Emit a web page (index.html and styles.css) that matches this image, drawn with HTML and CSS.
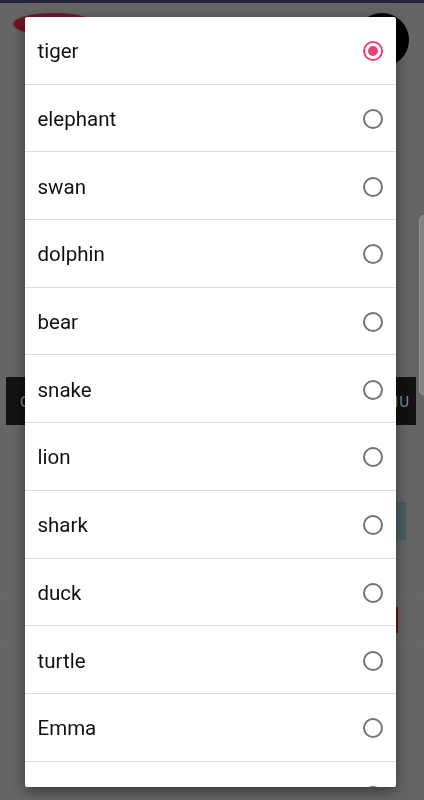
FILE: index.html
```html
<!DOCTYPE html>
<html lang="en">
<head>
    <meta charset="UTF-8">
    <meta name="viewport" content="width=device-width, initial-scale=1.0">
    <title>Pick an animal</title>
    <link rel="stylesheet" href="styles.css">
</head>
<body>

    <div class="screen">
        <div class="top-bar"></div>
        <div class="header">
            <div class="logo-oval"></div>
            <div class="avatar"></div>
        </div>

        <div class="menu-bar">
            <span class="menu-left">Q</span>
            <span class="menu-right">NU</span>
        </div>

        <div class="teal-btn"></div>
        <div class="faint-line"></div>
        <div class="red-btn"></div>
        <div class="faint-line low"></div>

        <div class="side-tab"></div>
    </div>

    <div class="dialog">
        <ul class="choice-list">
            <li class="choice selected"><span>tiger</span><span class="radio"></span></li>
            <li class="choice"><span>elephant</span><span class="radio"></span></li>
            <li class="choice"><span>swan</span><span class="radio"></span></li>
            <li class="choice"><span>dolphin</span><span class="radio"></span></li>
            <li class="choice"><span>bear</span><span class="radio"></span></li>
            <li class="choice"><span>snake</span><span class="radio"></span></li>
            <li class="choice"><span>lion</span><span class="radio"></span></li>
            <li class="choice"><span>shark</span><span class="radio"></span></li>
            <li class="choice"><span>duck</span><span class="radio"></span></li>
            <li class="choice"><span>turtle</span><span class="radio"></span></li>
            <li class="choice"><span>Emma</span><span class="radio"></span></li>
            <li class="choice"><span></span><span class="radio"></span></li>
        </ul>
    </div>

</body>
</html>
```

FILE: styles.css
```css
body {
    margin: 0;
    background: #656565;
    font-family: Roboto, "Noto Sans", Arial, sans-serif;
    overflow: hidden;
}

.screen {
    display: flex;
    flex-direction: column;
    height: 800px;
}

.top-bar {
    height: 3px;
    background: #24243d;
}

.header {
    display: flex;
    justify-content: space-between;
    align-items: flex-start;
    padding: 10px 15px 0 13px;
}

.logo-oval {
    width: 82px;
    height: 22px;
    border-radius: 50%;
    background: #741525;
}

.avatar {
    width: 54px;
    height: 54px;
    border-radius: 50%;
    background: #000;
}

.menu-bar {
    margin: 310px 8px 0 6px;
    border-top: 1px solid #161616;
    height: 47px;
    display: flex;
    justify-content: space-between;
    align-items: center;
    padding: 0 14px;
    background: #121212;
    color: #8a8a8a;
    font-size: 15px;
}

.menu-right {
    letter-spacing: 1px;
    margin-right: -8px;
}

.teal-btn {
    margin: 77px 18px 0 250px;
    height: 38px;
    background: #4b5d64;
}

.faint-line {
    margin-top: 53px;
    height: 1px;
    background: #696969;
}

.faint-line.low {
    margin-top: 10px;
}

.red-btn {
    margin: 13px 26px 0 200px;
    height: 26px;
    background: #6b1818;
}

.side-tab {
    position: absolute;
    top: 215px;
    left: 419px;
    width: 12px;
    height: 178px;
    border-radius: 5px;
    background: #828282;
    border: 1px solid #989898;
}

.dialog {
    position: fixed;
    top: 17px;
    left: 25px;
    width: 371px;
    height: 770px;
    background: #fff;
    border-radius: 2px;
    overflow: hidden;
    box-shadow: 0 4px 14px rgba(0, 0, 0, 0.45);
}

.choice-list {
    list-style: none;
    margin: 0;
    padding: 0;
}

.choice {
    box-sizing: border-box;
    height: 67.7px;
    display: flex;
    justify-content: space-between;
    align-items: center;
    padding: 2px 13.5px 0 12.5px;
    border-bottom: 1px solid #dedede;
    font-size: 20.5px;
    color: #111;
}

.radio {
    box-sizing: border-box;
    width: 20px;
    height: 20px;
    border: 2px solid #737373;
    border-radius: 50%;
    display: flex;
    align-items: center;
    justify-content: center;
}

.selected .radio {
    border-color: #ec407a;
}

.selected .radio::after {
    content: "";
    width: 10px;
    height: 10px;
    border-radius: 50%;
    background: #ec407a;
}
```
